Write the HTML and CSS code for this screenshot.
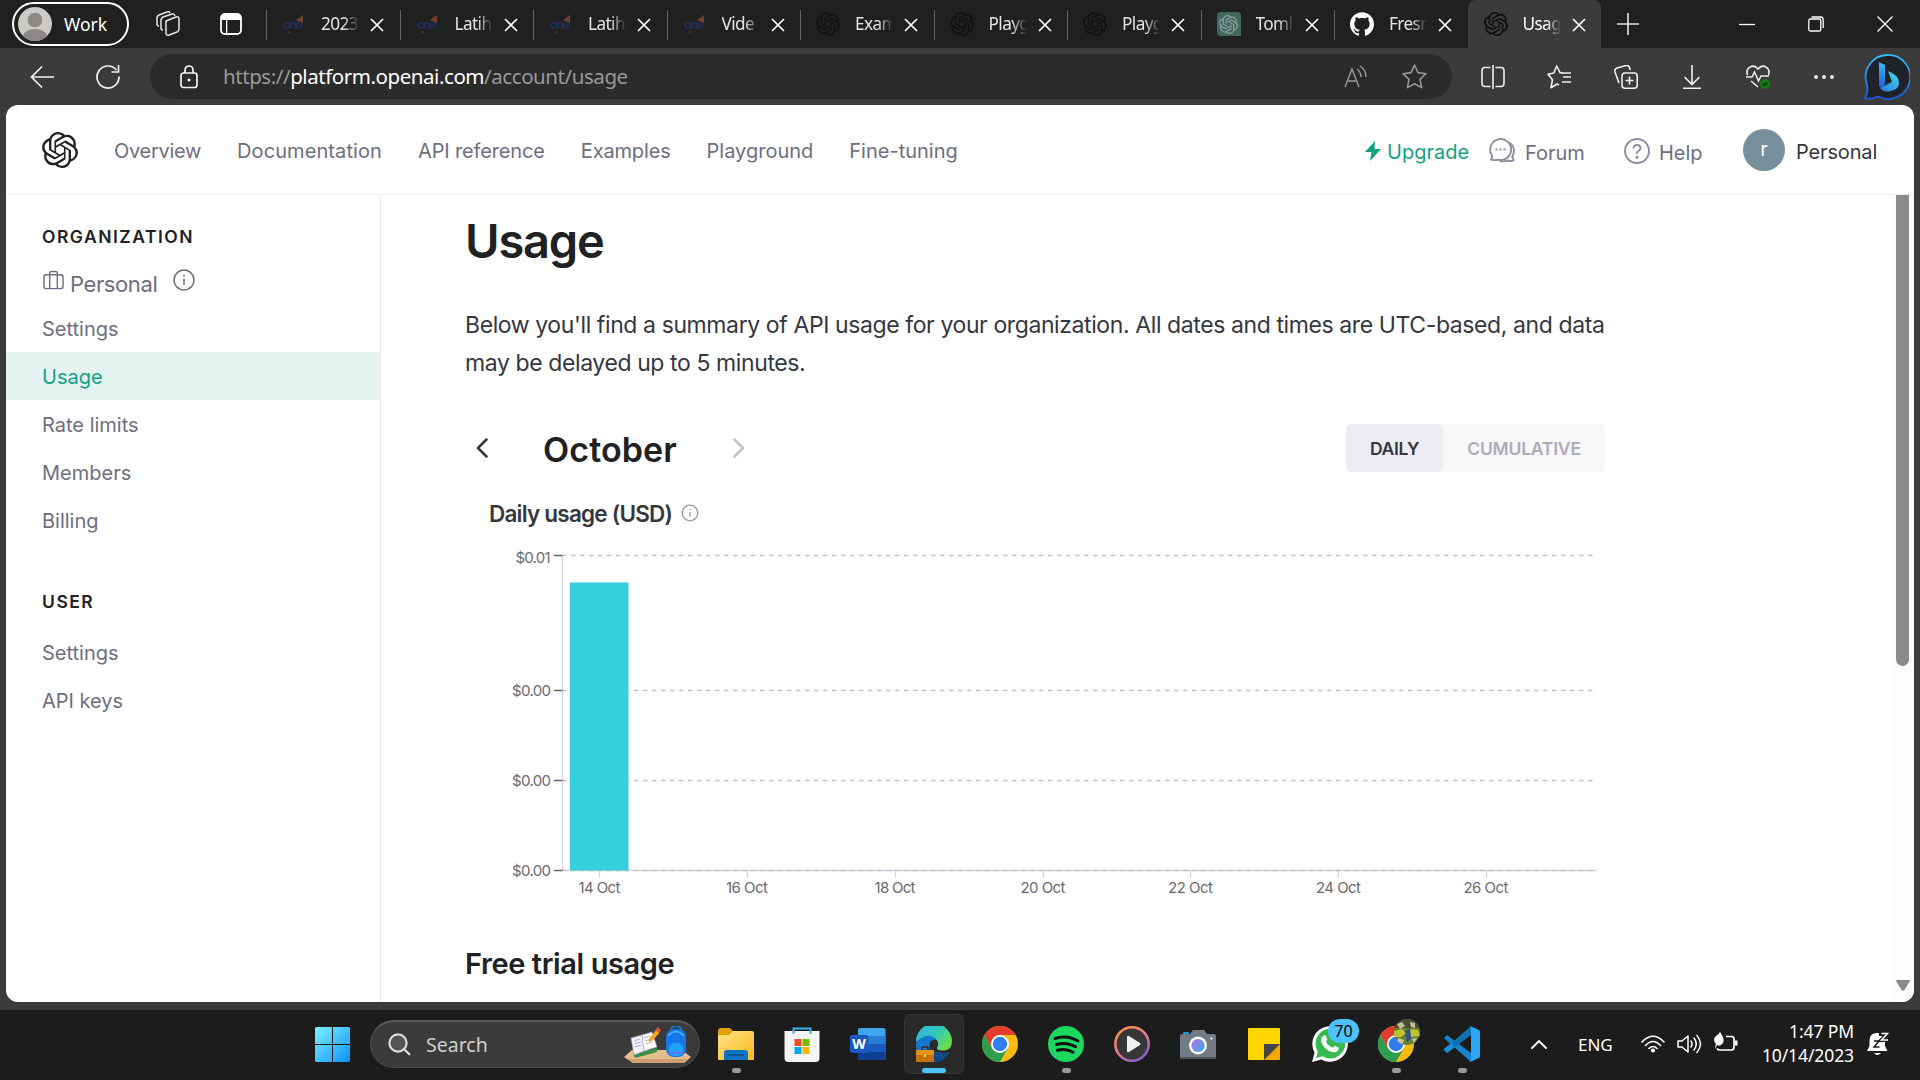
FILE: index.html
```html
<!DOCTYPE html>
<html lang="en">
<head>
<meta charset="utf-8">
<title>Usage - OpenAI API</title>
<link rel="stylesheet" href="styles.css">
</head>
<body>
<svg class="defs" aria-hidden="true">
  <symbol id="openai" viewBox="0 0 24 24"><path d="M22.2819 9.8211a5.9847 5.9847 0 0 0-.5157-4.9108 6.0462 6.0462 0 0 0-6.5098-2.9A6.0651 6.0651 0 0 0 4.9807 4.1818a5.9847 5.9847 0 0 0-3.9977 2.9 6.0462 6.0462 0 0 0 .7427 7.0966 5.98 5.98 0 0 0 .511 4.9107 6.051 6.051 0 0 0 6.5146 2.9001A5.9847 5.9847 0 0 0 13.2599 24a6.0557 6.0557 0 0 0 5.7718-4.2058 5.9894 5.9894 0 0 0 3.9977-2.9001 6.0557 6.0557 0 0 0-.7475-7.0729zm-9.022 12.6081a4.4755 4.4755 0 0 1-2.8764-1.0408l.1419-.0804 4.7783-2.7582a.7948.7948 0 0 0 .3927-.6813v-6.7369l2.02 1.1686a.071.071 0 0 1 .038.052v5.5826a4.504 4.504 0 0 1-4.4945 4.4944zm-9.6607-4.1254a4.4708 4.4708 0 0 1-.5346-3.0137l.142.0852 4.783 2.7582a.7712.7712 0 0 0 .7806 0l5.8428-3.3685v2.3324a.0804.0804 0 0 1-.0332.0615L9.74 19.9502a4.4992 4.4992 0 0 1-6.1408-1.6464zM2.3408 7.8956a4.485 4.485 0 0 1 2.3655-1.9728V11.6a.7664.7664 0 0 0 .3879.6765l5.8144 3.3543-2.0201 1.1685a.0757.0757 0 0 1-.071 0l-4.8303-2.7865A4.504 4.504 0 0 1 2.3408 7.872zm16.5963 3.8558L13.1038 8.364 15.1192 7.2a.0757.0757 0 0 1 .071 0l4.8303 2.7913a4.4944 4.4944 0 0 1-.6765 8.1042v-5.6772a.79.79 0 0 0-.407-.667zm2.0107-3.0231l-.142-.0852-4.7735-2.7818a.7759.7759 0 0 0-.7854 0L9.409 9.2297V6.8974a.0662.0662 0 0 1 .0284-.0615l4.8303-2.7866a4.4992 4.4992 0 0 1 6.6802 4.66zM8.3065 12.863l-2.02-1.1638a.0804.0804 0 0 1-.038-.0567V6.0742a4.4992 4.4992 0 0 1 7.3757-3.4537l-.142.0805L8.704 5.459a.7948.7948 0 0 0-.3927.6813zm1.0976-2.3654l2.602-1.4998 2.6069 1.4998v2.9994l-2.5974 1.4997-2.6067-1.4997Z"/></symbol>
  <symbol id="github" viewBox="0 0 24 24"><path d="M12 .297c-6.63 0-12 5.373-12 12 0 5.303 3.438 9.8 8.205 11.385.6.113.82-.258.82-.577 0-.285-.01-1.04-.015-2.04-3.338.724-4.042-1.61-4.042-1.61C4.422 18.07 3.633 17.7 3.633 17.7c-1.087-.744.084-.729.084-.729 1.205.084 1.838 1.236 1.838 1.236 1.07 1.835 2.809 1.305 3.495.998.108-.776.417-1.305.76-1.605-2.665-.3-5.466-1.332-5.466-5.93 0-1.31.465-2.38 1.235-3.22-.135-.303-.54-1.523.105-3.176 0 0 1.005-.322 3.3 1.23.96-.267 1.98-.399 3-.405 1.02.006 2.04.138 3 .405 2.28-1.552 3.285-1.23 3.285-1.23.645 1.653.24 2.873.12 3.176.765.84 1.23 1.91 1.23 3.22 0 4.61-2.805 5.625-5.475 5.92.42.36.81 1.096.81 2.22 0 1.606-.015 2.896-.015 3.286 0 .315.21.69.825.57C20.565 22.092 24 17.592 24 12.297c0-6.627-5.373-12-12-12"/></symbol>
  <symbol id="one" viewBox="0 0 24 24"><text x="1" y="17" font-family="Open Sans, sans-serif" font-weight="700" font-size="13" fill="#1f2f50" textLength="20">one</text><path d="M14 8l7-5v8z" fill="#72402f"/><circle cx="7" cy="20" r="1" fill="#6b2f25"/></symbol>
  <symbol id="close" viewBox="0 0 14 14"><path d="M1 1l12 12M13 1L1 13" stroke="#fff" stroke-width="1.7" fill="none"/></symbol>
  <symbol id="chrome" viewBox="0 0 36 36"><circle cx="18" cy="18" r="18" fill="#fbbc12"/><path d="M2.4 9A18 18 0 0 1 33.6 9H18A9 9 0 0 0 9.800 14.500L10.200 22.500z" fill="#e33b2e"/><path d="M2.400 9L10.200 22.500 18 27 25.800 22.500 18 36A18 18 0 0 1 2.400 9z" fill="#2f9e4f"/><circle cx="18" cy="18" r="9" fill="#fff"/><circle cx="18" cy="18" r="7.200" fill="#2f7df0"/></symbol>
</svg>

<header class="tabstrip">
  <div class="profile">
    <svg class="profile-pic" viewBox="0 0 34 34"><defs><clipPath id="pc"><circle cx="17" cy="17" r="17"/></clipPath></defs><g clip-path="url(#pc)"><rect width="34" height="34" fill="#cccac7"/><circle cx="17" cy="13" r="7.3" fill="#8b8885"/><path d="M4 34c0-9 6-12 13-12s13 3 13 12z" fill="#8b8885"/></g></svg>
    <span>Work</span>
  </div>
  <svg class="ic-workspaces" viewBox="0 0 26 26" fill="none" stroke="#e8e8e8" stroke-width="1.5" stroke-linejoin="round"><path d="M11 10l10-4q3-1 3 2v10q0 2-2 3l-8 3q-3 1-3-2z"/><path d="M8 19q-2 0-2-2V9q0-2 2-3l9-3q2-1 3 2"/><path d="M4 15q-2 0-2-2V7q0-2 2-3l8-3q2-1 3 1"/></svg>
  <svg class="ic-vertical" viewBox="0 0 22 22"><rect x="1" y="1" width="20" height="20" rx="4" fill="none" stroke="#fff" stroke-width="1.8"/><path d="M1 6V4q0-3 3-3h14q3 0 3 3v3H1zM6 7h1.3v14H6z" fill="#fff"/></svg>
  <nav class="tabs">
    <div class="tab"><svg class="fav"><use href="#one"/></svg><span class="tab-title">2023</span><svg class="x"><use href="#close"/></svg></div>
    <div class="tab"><svg class="fav"><use href="#one"/></svg><span class="tab-title">Latih</span><svg class="x"><use href="#close"/></svg></div>
    <div class="tab"><svg class="fav"><use href="#one"/></svg><span class="tab-title">Latih</span><svg class="x"><use href="#close"/></svg></div>
    <div class="tab"><svg class="fav"><use href="#one"/></svg><span class="tab-title">Vide</span><svg class="x"><use href="#close"/></svg></div>
    <div class="tab"><svg class="fav dim"><use href="#openai"/></svg><span class="tab-title">Exam</span><svg class="x"><use href="#close"/></svg></div>
    <div class="tab"><svg class="fav dim"><use href="#openai"/></svg><span class="tab-title">Playg</span><svg class="x"><use href="#close"/></svg></div>
    <div class="tab"><svg class="fav dim"><use href="#openai"/></svg><span class="tab-title">Playg</span><svg class="x"><use href="#close"/></svg></div>
    <div class="tab"><span class="fav chat"><svg><use href="#openai"/></svg></span><span class="tab-title">Toml</span><svg class="x"><use href="#close"/></svg></div>
    <div class="tab"><svg class="fav white"><use href="#github"/></svg><span class="tab-title">Fresn</span><svg class="x"><use href="#close"/></svg></div>
    <div class="tab active"><svg class="fav black"><use href="#openai"/></svg><span class="tab-title">Usag</span><svg class="x"><use href="#close"/></svg></div>
  </nav>
  <svg class="newtab" viewBox="0 0 22 22"><path d="M11 0v22M0 11h22" stroke="#e8e8e8" stroke-width="1.6"/></svg>
  <div class="window-buttons">
    <svg viewBox="0 0 16 16"><path d="M0 8.500h16" stroke="#fff" stroke-width="1.300"/></svg>
    <svg viewBox="0 0 16 16" fill="none" stroke="#fff" stroke-width="1.300"><rect x=".8" y="3" width="12" height="12" rx="1.500"/><path d="M3.500 1h9q2.700 0 2.700 2.700V12"/></svg>
    <svg viewBox="0 0 16 16"><path d="M.5.5l15 15M15.500.5l-15 15" stroke="#fff" stroke-width="1.300"/></svg>
  </div>
</header>

<div class="toolbar">
  <svg class="ic-back" viewBox="0 0 24 24"><path d="M24 12H1.500M12 1.500L1.500 12 12 22.500" fill="none" stroke="#f2f2f2" stroke-width="1.700"/></svg>
  <svg class="ic-reload" viewBox="0 0 24 24"><path d="M20.500 5A11 11 0 1 0 23 11.500M22.500 0v7h-7" fill="none" stroke="#f2f2f2" stroke-width="1.700"/></svg>
  <div class="address">
    <svg class="ic-lock" viewBox="0 0 18 24" fill="none" stroke="#f5f5f5" stroke-width="1.700"><rect x="1" y="8" width="16" height="14.500" rx="2.500"/><path d="M5 8V5a4 4 0 0 1 8 0v3"/><circle cx="9" cy="15" r="1.500" fill="#fff" stroke="none"/></svg>
    <span class="url">https://<b>platform.openai.com</b>/account/usage</span>
    <svg class="ic-read" viewBox="0 0 24 24" fill="none" stroke="#999" stroke-width="1.500"><path d="M1 22L8 4l7 18M3.500 16h9M13 4q4 3 4 8M16 1q6 4 6 11"/></svg>
    <svg class="ic-star" viewBox="0 0 24 24" fill="none" stroke="#999" stroke-width="1.500" stroke-linejoin="round"><path d="M12 1l3.300 7.300 7.700 1-5.700 5.400 1.500 8L12 19l-6.800 3.700 1.500-8L1 9.300l7.700-1z"/></svg>
  </div>
  <div class="tools">
    <svg viewBox="0 0 24 24"><path d="M9.500 2.500H4q-3 0-3 3v13q0 3 3 3h5.500M14.500 2.500H20q3 0 3 3v13q0 3-3 3h-5.500M12 0v24"/></svg>
    <svg viewBox="0 0 24 24"><path d="M17 8.300l-4-.7L9.700 1 6.800 8 1 9.300l4.500 5.400-1.500 8L10 19l2 1M16 12h8M13 8h11M15 17h9" stroke-linejoin="round"/></svg>
    <svg viewBox="0 0 24 24"><rect x="8" y="8" width="15.200" height="15.200" rx="3"/><path d="M15.500 11.500v8M11.500 15.500h8M5 18L1 7q-.8-3 2-4l9-2.500q2.500-.5 3.500 2l.8 2.500"/></svg>
    <svg viewBox="0 0 24 24"><path d="M12 0v19M4.500 12l7.500 7.500 7.500-7.500M3 23.200h18"/></svg>
    <svg viewBox="0 0 24 24"><path d="M1.500 10C-1 3 7-2 12 4c5-6 13-1 10.500 6M0 12h6l2.500-5 4 9 2.500-5h8M5 16l7 6"/><circle cx="19" cy="19" r="5" fill="#107c10" stroke="none"/><path d="M16.800 19l1.600 1.600 2.800-3" stroke="#052e05"/></svg>
    <svg viewBox="0 0 24 24" class="dots"><circle cx="4" cy="12" r="1.900"/><circle cx="12" cy="12" r="1.900"/><circle cx="20" cy="12" r="1.900"/></svg>
  </div>
  <svg class="bing" viewBox="0 0 46 46"><defs><linearGradient id="bg1" x1="0" y1="0" x2="0" y2="1"><stop offset="0" stop-color="#35bdf5"/><stop offset="1" stop-color="#2057d8"/></linearGradient><linearGradient id="bg2" x1="0" y1="1" x2="1" y2="0"><stop offset="0" stop-color="#2b74e8"/><stop offset="1" stop-color="#3fe0e8"/></linearGradient></defs><path d="M23 1A22 22 0 1 1 14 42.500Q9 45 1 44.500Q5 38 2.500 29A22 22 0 0 1 23 1z" fill="#1f2227" stroke="url(#bg1)" stroke-width="1.800"/><path d="M15 8l6 3v19l-3 5-3-3z" fill="url(#bg1)"/><path d="M24 17q11 4 11 12 0 6-8 8-7 2-11-3l12-6z" fill="url(#bg2)"/></svg>
</div>

<div class="viewport">
  <header class="site-head">
    <svg class="logo"><use href="#openai"/></svg>
    <nav class="site-nav"><a class="tight">Overview</a><a class="wide">Documentation</a><a>API reference</a><a>Examples</a><a class="even">Playground</a><a class="even">Fine-tuning</a></nav>
    <div class="account">
      <svg class="bolt" viewBox="0 0 16 20"><path d="M10 0L0 11h6.500L5 20 16 8H9.500z" fill="#10a37f"/></svg>
      <a class="upgrade">Upgrade</a>
      <svg class="ic-forum" viewBox="0 0 26 26" fill="none" stroke="#8e8ea0" stroke-width="1.900" stroke-linejoin="round"><path d="M2 21.500q1.500-1.500 1-4A10.500 10.500 0 1 1 9 21.700q-3 1-7-.2z"/><path d="M20.500 4.500a10 10 0 0 1 3 13.500q-.4 2 1.300 4-3 2-6 .3-4 2-8.500.3"/><path d="M6.500 11.500h2M10.500 11.500h2M14.500 11.500h2"/></svg>
      <a class="forum">Forum</a>
      <svg class="ic-help" viewBox="0 0 26 26" fill="none" stroke="#8e8ea0" stroke-width="1.900"><circle cx="13" cy="13" r="12"/><path d="M9.500 10.500q0-3.500 3.500-3.500t3.500 3q0 1.800-1.800 2.800T13 15.500v.8"/><circle cx="13" cy="19.300" r=".7" fill="#8e8ea0"/></svg>
      <a class="help">Help</a>
      <span class="avatar">r</span>
      <span class="me">Personal</span>
    </div>
  </header>

  <div class="site-body">
    <aside class="sidebar">
      <h4>ORGANIZATION</h4>
      <div class="org">
        <svg class="ic-case" viewBox="0 0 22 20" fill="none" stroke="#6e6e80" stroke-width="1.500"><rect x="1" y="4.500" width="20" height="14.500" rx="2.500"/><path d="M7 19V3q0-2 2-2h4q2 0 2 2v16"/></svg>
        <span>Personal</span>
        <svg class="ic-info" viewBox="0 0 22 22" fill="none" stroke="#6e6e80" stroke-width="1.500"><circle cx="11" cy="11" r="10"/><path d="M11 9.500V16M11 5.800v1.700"/></svg>
      </div>
      <a>Settings</a>
      <a class="current">Usage</a>
      <a>Rate limits</a>
      <a>Members</a>
      <a>Billing</a>
      <h4 class="user">USER</h4>
      <a>Settings</a>
      <a>API keys</a>
    </aside>
    <main>
      <h1>Usage</h1>
      <p>Below you'll find a summary of API usage for your organization. All dates and times are UTC-based, and data<br><span>may be delayed up to 5 minutes.</span></p>
      <div class="month-row">
        <svg class="chev" viewBox="0 0 12 20"><path d="M10.500 1.500L2 10l8.500 8.500" fill="none" stroke="#353740" stroke-width="2.500" stroke-linecap="round" stroke-linejoin="round"/></svg>
        <h2>October</h2>
        <svg class="chev" viewBox="0 0 12 20"><path d="M1.500 1.500L10 10l-8.500 8.500" fill="none" stroke="#c2c2c4" stroke-width="2.500" stroke-linecap="round" stroke-linejoin="round"/></svg>
        <div class="toggle"><span class="on">DAILY</span><span class="off">CUMULATIVE</span></div>
      </div>
      <div class="chart-title"><span>Daily usage (USD)</span><svg viewBox="0 0 18 18" fill="none" stroke="#999" stroke-width="1.300"><circle cx="9" cy="9" r="7.800"/><path d="M9 8v5M9 5v1.400"/></svg></div>
      <svg class="chart" viewBox="466 540 1139 370">
        <g class="grid"><path d="M562 555.500H1594M562 690.500H1594M562 780.500H1594"/></g>
        <path d="M562.500 555V870.500H1597" class="axis"/>
        <g class="grid"><path d="M562 870.500H1597"/></g>
        <path d="M599.500 871v7M747.500 871v7M895.500 871v7M1043.500 871v7M1190.500 871v7M1338.500 871v7M1486.500 871v7" class="axis"/>
        <path d="M554 555.500h8.500M554 690.500h8.500M554 780.500h8.500M554 870.500h8.500" stroke="#666" stroke-width="1.500"/>
        <rect x="569.800" y="582.500" width="58.700" height="288" fill="#35d0dc"/>
        <g class="ylabels"><text x="515.500" y="562.500" textLength="35">$0.01</text><text x="512" y="696" textLength="39">$0.00</text><text x="512" y="786" textLength="39">$0.00</text><text x="512" y="876" textLength="39">$0.00</text></g>
        <g class="xlabels"><text x="599.500" y="893" textLength="42">14 Oct</text><text x="747" y="893" textLength="42">16 Oct</text><text x="895" y="893" textLength="41">18 Oct</text><text x="1043" y="893" textLength="45">20 Oct</text><text x="1190.500" y="893" textLength="45">22 Oct</text><text x="1338.500" y="893" textLength="45">24 Oct</text><text x="1486" y="893" textLength="45">26 Oct</text></g>
      </svg>
      <h3>Free trial usage</h3>
    </main>
    <div class="scrollbar"><div class="thumb"></div><svg viewBox="0 0 14 11"><path d="M1 0h12q1.500 0 .8 1.300L8.500 10q-1.500 1.500-3 0L.2 1.300Q-.5 0 1 0z" fill="#8b8b8b"/></svg></div>
  </div>
</div>

<footer class="taskbar">
  <div class="cell start"><svg viewBox="0 0 35 35"><defs><linearGradient id="win" x1="0" y1="0" x2="1" y2="1"><stop offset="0" stop-color="#80f0ff"/><stop offset="1" stop-color="#0a93f8"/></linearGradient></defs><path d="M1 0h16v17H0V1zM18 0h16l1 1v16H18zM0 18h17v17H1l-1-1zM18 18h17v16l-1 1H18z" fill="url(#win)"/></svg></div>
  <div class="search">
    <svg class="mag" viewBox="0 0 23 23" fill="#555" stroke="#ddd" stroke-width="2.200" stroke-linecap="round"><circle cx="10" cy="10" r="8.600"/><path d="M16.500 16.500l4.800 4.800"/></svg>
    <span>Search</span>
    <svg class="art" viewBox="0 0 67 37"><path d="M0 31l8-7h50l9 7-7 6H9z" fill="#e6bd8f"/><path d="M4 33h59l-4 4H9z" fill="#cf9f73"/><path d="M9 28l24-6v4l-22 6z" fill="#3a8f45"/><path d="M7 12l11-3 2 16-10 4z" fill="#f2eefa" stroke="#a9a3c4" stroke-width=".6"/><path d="M18 9l10-3 5 15-13 4z" fill="#fff" stroke="#a9a3c4" stroke-width=".6"/><path d="M10 15l6-2M10.500 18l6-2M11 21l6-2M20 12l6-2M21 15l6-2M22 18l6-2" stroke="#b7b2cc"/><path d="M25 13l7-9 3.500 3L28 15l-3.500 1z" fill="#f5a623"/><path d="M31.500 4l2-3 3.500 3-2 3z" fill="#e5533d"/><path d="M47 4q0-4 5-4t5 4" fill="none" stroke="#1b78d6" stroke-width="1.800"/><rect x="42" y="3" width="20" height="28" rx="8" fill="#1578e8"/><path d="M44 10q8-9 16 0" stroke="#53b4ff" stroke-width="1.600" fill="none"/><rect x="44.500" y="17" width="15" height="13" rx="6" fill="#1fa4f5"/><path d="M45 27h14" stroke="#7c5cf0" stroke-width="1.500"/></svg>
  </div>
  <div class="cell run"><svg viewBox="0 0 36 36"><defs><linearGradient id="fo" x1="0" y1="0" x2="1" y2="1"><stop offset="0" stop-color="#ffe08a"/><stop offset="1" stop-color="#fbbc1a"/></linearGradient></defs><path d="M0 5q0-3 3-3h9l4 4-2 4H0z" fill="#e0a000"/><path d="M0 9h11l4-4h19q2 0 2 2v27H1q-1 0-1-1z" fill="url(#fo)"/><path d="M6 34v-7q0-3 3-3h18q3 0 3 3v7z" fill="#0f73c4"/><path d="M10 29h16" stroke="#0a4d8c" stroke-width="1.500"/></svg></div>
  <div class="cell"><svg viewBox="0 0 36 36"><path d="M.5 5h35v27q0 4-4 4h-27q-4 0-4-4z" fill="#f4f4f4"/><path d="M9.500 8V2.500h17V8" fill="none" stroke="#37b5e8" stroke-width="2"/><path fill="#f25022" d="M10.500 13h7v7h-7z"/><path fill="#7fba00" d="M18.500 13h7v7h-7z"/><path fill="#00a4ef" d="M10.500 21h7v7h-7z"/><path fill="#ffb900" d="M18.500 21h7v7h-7z"/></svg></div>
  <div class="cell"><svg viewBox="0 0 36 36"><rect x="8" y="2" width="27.500" height="32" rx="2" fill="#41a5ee"/><path d="M8 10h27.500v8H8z" fill="#2b7cd3"/><path d="M8 18h27.500v8H8z" fill="#185abd"/><path d="M8 26h27.500v6q0 2-2 2H10q-2 0-2-2z" fill="#103f91"/><rect y="9" width="18.500" height="18" rx="2" fill="#185abd"/><text x="9" y="23" text-anchor="middle" font-family="Open Sans, sans-serif" font-weight="700" font-size="14" fill="#fff">W</text></svg></div>
  <div class="cell focus"><svg viewBox="0 0 36 36"><defs><linearGradient id="e1" x1="0" y1="0" x2="1" y2=".6"><stop offset="0" stop-color="#2cb5e8"/><stop offset=".6" stop-color="#34c9b5"/><stop offset="1" stop-color="#6bdc4f"/></linearGradient></defs><path d="M0 18Q1 9 11 9q7 0 9 5-7-1-6.500 6Q15 29 33 26.500 28 36 18 36H6Q0 30 0 18z" fill="#1479cf"/><path d="M13.500 20Q15 29 33 26.500 28 36 18 36q-8-8-4.500-16z" fill="#114a8b"/><path d="M0 16A18 18 0 0 1 36 15q0 9-8 9.500-8 0-7-3 3-4.500-1.500-9Q11 5 0 16z" fill="url(#e1)"/><path d="M6 24v-2q0-1 1-1h4q1 0 1 1v2" fill="none" stroke="#402508" stroke-width="1.500"/><path d="M0 24h18v12H0z" fill="#c67208"/><path d="M0 24h18v5H0z" fill="#e29118"/><path d="M8 29h2v2H8z" fill="#ffe14d"/></svg></div>
  <div class="cell"><svg><use href="#chrome"/></svg></div>
  <div class="cell run"><svg viewBox="0 0 36 36"><circle cx="18" cy="18" r="18" fill="#1ed760"/><path d="M7 12.500q12-4 23 2.500M8.500 18.500q10-3 19 2.300M9.500 24.300q8-2.500 15.500 1.900" fill="none" stroke="#111" stroke-width="3" stroke-linecap="round"/></svg></div>
  <div class="cell"><svg viewBox="0 0 36 36"><defs><linearGradient id="mp" x1="0" y1="0" x2=".6" y2="1"><stop offset="0" stop-color="#ff9a3c"/><stop offset=".6" stop-color="#e47a96"/><stop offset="1" stop-color="#8a63c9"/></linearGradient></defs><circle cx="18" cy="18" r="16.700" fill="#373737" stroke="url(#mp)" stroke-width="2.500"/><path d="M13 11v14q0 2 2 1l11-7q1-1 0-2l-11-7q-2-1-2 1z" fill="#f2f2f2"/></svg></div>
  <div class="cell"><svg viewBox="0 0 36 36"><defs><linearGradient id="cam" x1="0" y1="0" x2="1" y2="1"><stop offset="0" stop-color="#c66de0"/><stop offset="1" stop-color="#25b5ef"/></linearGradient></defs><rect x="3" y="6" width="6" height="4" rx="1" fill="#1d9bd7"/><path d="M0 10q0-2 2-2h8l3-4h11l3 4h7q2 0 2 2v23H0z" fill="#727b84"/><path d="M0 31h36v2H0z" fill="#4c535a"/><circle cx="18" cy="19.500" r="9" fill="#fff"/><circle cx="18" cy="19.500" r="6.600" fill="url(#cam)"/><path d="M31.500 11v3M30 12.500h3" stroke="#d6dbe0"/></svg></div>
  <div class="cell"><svg viewBox="0 0 36 36"><path d="M2 3q0-1 1-1h30q1 0 1 1v15H18v16H3q-1 0-1-1z" fill="#fdd600"/><path d="M18 18h16L18 34z" fill="#454545"/><path d="M34 18v15q0 1-1 1H18z" fill="#f2a900"/></svg></div>
  <div class="cell"><svg viewBox="0 0 36 36"><path d="M0 36l2.600-9.300A17.800 17.800 0 1 1 9.300 33.400z" fill="#fff"/><path d="M4 32l1.800-6.500A14.800 14.800 0 1 1 10.500 30.200z" fill="#37b94d"/><path d="M11 10c1-1 2.500-1 3 .2l1.300 3c.2.700-1.300 2-1.300 2.500 1.500 3.200 4 5 6.500 6 .6 0 1.800-2.300 2.400-2l3.500 1.700c.6.500.3 3-1.400 4-5 3.500-16-4.400-16-11.400 0-2 1-3 2-4z" fill="#fff"/></svg><span class="badge">70</span></div>
  <div class="cell run"><svg><use href="#chrome"/></svg><svg class="photo" viewBox="0 0 26 26"><defs><clipPath id="ph"><circle cx="13" cy="13" r="13"/></clipPath></defs><g clip-path="url(#ph)"><rect width="26" height="26" fill="#66812f"/><path d="M0 0h26v9H0z" fill="#4a4b38"/><path d="M3 5l5-2 3 4-5 3zM16 3l5 1v5l-4-1z" fill="#c3bf98"/><path d="M0 12l8-2 4 4-5 4H0zM15 10l9 1 2 6-9 1z" fill="#bcc52f"/><path d="M11 12l5-3 1 10-4 5z" fill="#344e80"/><path d="M4 19l6 2-2 5-5-2zM18 20l5-1-3 5z" fill="#c9c5a3"/></g></svg></div>
  <div class="cell run"><svg viewBox="0 0 36 36"><path d="M0 12l3-3 24 18v9L1 13z" fill="#1583cc"/><path d="M0 24l3 3L27 9V0L1 22.500z" fill="#0f6fb5"/><path d="M0 24l3 3 8-6-4-4-6 5q-2 1-1 2z" fill="#178fdb"/><path d="M26 0l9 4q1 .5 1 2v24q0 1.500-1 2l-9 4q1-1 1-3V3q0-2-1-3z" fill="#2aa8f5"/></svg></div>
  <div class="tray">
    <svg class="t-up" viewBox="0 0 16 10"><path d="M1 9l7-7 7 7" fill="none" stroke="#fff" stroke-width="1.900" stroke-linecap="round"/></svg>
    <span class="lang">ENG</span>
    <svg class="t-wifi" viewBox="0 0 24 18" fill="none" stroke="#fff" stroke-width="1.600" stroke-linecap="round"><path d="M1 7q11-11.500 22 0M4.500 10.500q7.500-8 15 0M8 13.500q4-4 8 0"/><circle cx="12" cy="15.500" r="1.300" fill="#fff"/></svg>
    <svg class="t-vol" viewBox="0 0 25 20" fill="none" stroke="#fff" stroke-width="1.500" stroke-linecap="round" stroke-linejoin="round"><path d="M1 7h4l6-5v16l-6-5H1zM14 7q2 3 0 6M17 4q4.500 6 0 12M20 1.500q7 8.500 0 17"/></svg>
    <svg class="t-bat" viewBox="0 0 25 22" fill="none" stroke="#fff" stroke-width="1.700"><path d="M13 5.500h5.500q2.500 0 2.500 2.500v8q0 3-2.500 3H7q-2 0-3-1.500"/><path d="M22 9.500v5h2.500v-5z" fill="#fff" stroke="none"/><path d="M7 1q5 7 3 11-3 4-6 2l-2 4q0-3 1-5-4-5 0-8 3-2 4-4z" fill="#fff" stroke="none"/></svg>
    <div class="clock"><span>1:47 PM</span><span>10/14/2023</span></div>
    <svg class="t-bell" viewBox="0 0 22 24"><path d="M0 19l2.500-5V8Q3 1 10 1h2v3h7v4l-1 2v4l2.500 5zM7 21h7q-3.500 4-7 0z" fill="#fff"/><path d="M7 9h5l-5 6h5.500" fill="none" stroke="#1c1c1c" stroke-width="1.500"/><path d="M14.500 1.500h6l-6 6.500h6" fill="none" stroke="#1c1c1c" stroke-width="4"/><path d="M14.500 1.500h6l-6 6.500h6.500" fill="none" stroke="#fff" stroke-width="1.500"/></svg>
  </div>
</footer>
</body>
</html>
```
FILE: styles.css
```css
* { box-sizing: border-box; }
html, body { margin: 0; height: 1080px; overflow: hidden; }
body {
  width: 1920px;
  display: flex;
  flex-direction: column;
  background: #3b3b3b;
  font-family: "Noto Sans", sans-serif;
  color: #fff;
}
svg { display: block; flex: none; }
span, a, h1, h2, h3, h4 { white-space: nowrap; }
.defs { display: none; }

/* browser tab strip */
.tabstrip { height: 48px; flex: none; display: flex; align-items: center; background: #202020; padding-left: 12px; }
.profile { width: 117px; height: 44px; border: 2px solid #fff; border-radius: 22px; display: flex; align-items: center; padding-left: 4px; font-size: 17.5px; }
.profile-pic { width: 34px; height: 34px; margin-right: 12px; }
.ic-workspaces { width: 26px; height: 26px; margin-left: 26px; }
.ic-vertical { width: 22px; height: 22px; margin-left: 39px; }
.tabs { display: flex; align-self: stretch; margin-left: 24px; }
.tab { width: 133.5px; position: relative; display: flex; align-items: center; padding-left: 16px; }
.tab::before { content: ""; position: absolute; left: 0; top: 10px; width: 1px; height: 30px; background: #666; }
.fav { width: 24px; height: 24px; margin-right: 15px; }
.fav.dim { fill: #111; }
.fav.white { fill: #fff; }
.fav.black { fill: #0c0c0c; }
.fav.chat { background: #42695f; border-radius: 4px 4px 0 4px; display: flex; align-items: center; justify-content: center; }
.fav.chat svg { width: 19px; height: 19px; fill: #8ba49d; }
.tab-title { width: 38px; height: 24px; line-height: 24px; font-size: 17.2px; letter-spacing: -.6px; color: #e4e4e4; mask-image: linear-gradient(90deg, #000 60%, transparent 100%); }
.x { width: 14px; height: 14px; margin-left: 11px; margin-top: 2px; }
.tab.active { background: #3b3b3b; border-radius: 8px 8px 0 0; }
.tab.active::before { display: none; }
.active .tab-title { color: #fff; }
.newtab { width: 22px; height: 22px; margin-left: 16px; }
.window-buttons { display: flex; gap: 53px; margin-left: auto; padding-right: 27px; }
.window-buttons svg { width: 16px; height: 16px; }

/* address bar row */
.toolbar { height: 57px; flex: none; display: flex; align-items: center; padding: 0 10px 0 30px; }
.ic-back { width: 24px; height: 24px; }
.ic-reload { width: 24px; height: 24px; margin-left: 42px; }
.address { width: 1302px; height: 45px; margin-left: 30px; background: #2b2b2b; border-radius: 23px; display: flex; align-items: center; padding: 0 25px 0 30px; }
.ic-lock { width: 18px; height: 24px; margin-right: 25px; }
.url { font-size: 20.5px; color: #999; letter-spacing: -.44px; margin-top: -2px; }
.url b { font-weight: 400; color: #fff; }
.ic-read { width: 24px; height: 24px; margin-left: auto; }
.ic-star { width: 25px; height: 25px; margin-left: 34px; }
.tools { display: flex; gap: 42.3px; margin-left: 29px; }
.tools svg { width: 24px; height: 24px; fill: none; stroke: #f0f0f0; stroke-width: 1.6; }
.tools .dots { fill: #f0f0f0; stroke: none; }
.bing { width: 46px; height: 46px; margin-left: auto; }

/* page */
.viewport { width: 1908px; height: 897px; flex: none; margin-left: 6px; border-radius: 12px; overflow: hidden; background: #fff; color: #6e6e80; font-family: Inter, "Liberation Sans", sans-serif; font-size: 20px; display: flex; flex-direction: column; }
.site-head { height: 90px; flex: none; border-bottom: 1px solid #ececf1; display: flex; align-items: center; padding: 0 36px; }
.logo { width: 36px; height: 36px; fill: #202123; }
.site-nav { display: flex; gap: 36px; margin-left: 36px; padding-top: 2px; }
.site-nav a { letter-spacing: -.15px; }
.site-nav a.tight { letter-spacing: -.3px; }
.site-nav a.wide { letter-spacing: .1px; }
.site-nav a.even { letter-spacing: 0; }
.account { display: flex; align-items: center; margin-left: auto; }
.bolt { width: 16px; height: 20px; margin-right: 6px; margin-top: 2px; }
.upgrade { width: 102px; padding-top: 4px; color: #10a37f; letter-spacing: 0; }
.ic-forum { width: 26px; height: 26px; margin: 3px 10px 0 0; }
.forum { width: 99px; padding-top: 6px; }
.ic-help { width: 26px; height: 26px; margin: 3px 9px 0 0; }
.help { width: 84px; padding-top: 6px; }
.avatar { width: 42px; height: 42px; border-radius: 50%; background: #768f9b; color: #fff; text-align: center; line-height: 40px; margin-right: 11px; }
.me { width: 82px; padding-top: 4px; color: #353740; letter-spacing: -.15px; }
.site-body { flex: 1; display: flex; min-height: 0; }

.sidebar { width: 375px; flex: none; border-right: 1px solid #ececf1; padding-top: 26px; display: flex; flex-direction: column; }
.sidebar h4 { margin: 0; padding-left: 36px; height: 32px; line-height: 32px; font-size: 17.5px; font-weight: 600; letter-spacing: 1.5px; color: #202123; }
.org { height: 51px; padding: 10px 0 0 37px; display: flex; align-items: center; font-size: 22px; }
.org span { width: 103px; letter-spacing: -.4px; }
.ic-case { width: 21px; height: 20px; margin: -7px 6px 0 0; }
.ic-info { width: 22px; height: 22px; margin-top: -7px; }
.sidebar a { height: 48px; line-height: 50px; padding-left: 36px; }
.sidebar a.current { background: #e5f3f1; color: #10a37f; }
.sidebar h4.user { margin: 42px 0 10px; }

main { flex: 1; padding-left: 85px; color: #353740; }
main h1, main h2, main h3 { margin: 0; color: #202123; font-weight: 600; }
main h1 { margin-left: -1px; font-size: 47px; line-height: 56px; padding-top: 18px; letter-spacing: -1.2px; }
main p { margin: 37px 0 0 -1px; font-size: 23px; line-height: 38px; letter-spacing: -.4px; }
.month-row { width: 1139px; height: 48px; margin-top: 42px; padding-left: 10px; display: flex; align-items: center; }
.chev { width: 12px; height: 20px; }
.month-row h2 { width: 190px; margin-left: 55px; padding-top: 2px; font-size: 34px; letter-spacing: .1px; }
.toggle { display: flex; width: 259px; height: 48px; margin-left: auto; background: #f7f7f8; border-radius: 5px; font-size: 17.5px; font-weight: 600; line-height: 49px; text-align: center; }
.toggle .on { width: 97px; background: #ececf1; border-radius: 5px; letter-spacing: -.3px; }
.toggle .off { flex: 1; color: #acacbe; letter-spacing: -.2px; }
.chart-title { display: flex; align-items: center; height: 32px; margin-top: 25px; padding-left: 23px; font-size: 22.5px; font-weight: 600; }
.chart-title span { width: 192px; letter-spacing: -.78px; }
.chart-title svg { width: 18px; height: 18px; }
.chart { width: 1139px; height: 370px; margin-top: 11px; font-size: 15px; }
.chart text { fill: #6a6a6e; }
.grid { stroke: #c4c4c4; stroke-width: 1.5; stroke-dasharray: 4.5 4.5; }
.axis { stroke: #d3d3e4; stroke-width: 1.3; fill: none; }
.xlabels { text-anchor: middle; }
main h3 { margin-left: -1px; font-size: 29px; line-height: 36px; margin-top: 36px; letter-spacing: -.4px; }

.scrollbar { width: 23px; background: #fcfcfc; display: flex; flex-direction: column; align-items: center; }
.thumb { width: 13px; height: 471px; background: #8b8b8b; border-radius: 0 0 7px 7px; }
.scrollbar svg { width: 14px; height: 11px; margin-top: auto; margin-bottom: 11px; }

/* Windows taskbar */
.taskbar { height: 70px; margin-top: 8px; flex: none; background: #1c1c1c; display: flex; align-items: center; padding: 0 31px 2px 302px; }
.cell { width: 60px; height: 60px; margin-left: 6px; flex: none; position: relative; display: flex; align-items: center; justify-content: center; border-radius: 6px; }
.cell svg { width: 36px; height: 36px; }
.cell.start { margin-left: 0; }
.cell.start svg { width: 35px; height: 35px; }
.cell.focus { background: #2a2a2a; border: 1.5px solid #363636; }
.cell.run::after, .cell.focus::after { content: ""; position: absolute; bottom: 1px; left: 50%; width: 9px; height: 5px; margin-left: -4.5px; border-radius: 3px; background: #9a9a9a; }
.cell.focus::after { width: 24px; margin-left: -12px; background: #4cc2ff; bottom: 0; }
.badge { position: absolute; left: 28px; top: 5px; width: 31px; height: 24px; border-radius: 12px; background: #4cc2ff; color: #000; font-size: 16px; line-height: 24px; text-align: center; }
.cell .photo { position: absolute; left: 28px; top: 5px; width: 26px; height: 26px; }
.search { width: 330px; height: 48px; margin-left: 8px; flex: none; border-radius: 24px; background: #3b3b3b; border: 1px solid #4a4a4a; border-top: 2px solid #5c5c5c; display: flex; align-items: center; padding: 0 8px 0 17px; font-size: 19.5px; color: #d0d0d0; }
.mag { width: 23px; height: 23px; margin-right: 15px; }
.art { width: 67px; height: 37px; margin-left: auto; }
.tray { display: flex; align-items: center; margin-left: auto; font-size: 17.5px; }
.t-up { width: 16px; height: 10px; margin-right: 31px; }
.lang { width: 63px; font-size: 17px; }
.t-wifi { width: 24px; height: 18px; margin-right: 12px; }
.t-vol { width: 25px; height: 20px; margin-right: 11px; }
.t-bat { width: 25px; height: 22px; margin-top: -4px; }
.clock { width: 116px; display: flex; flex-direction: column; line-height: 24px; text-align: right; margin-top: -2px; letter-spacing: -.1px; }
.t-bell { width: 22px; height: 24px; margin-left: 13px; }
```
